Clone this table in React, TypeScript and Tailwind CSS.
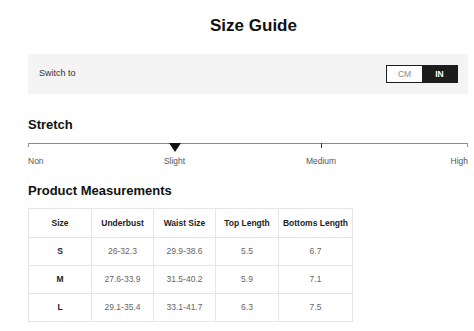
import React from 'react'

const headers = ['Size', 'Underbust', 'Waist Size', 'Top Length', 'Bottoms Length']

const rows = [
  ['S', '26-32.3', '29.9-38.6', '5.5', '6.7'],
  ['M', '27.6-33.9', '31.5-40.2', '5.9', '7.1'],
  ['L', '29.1-35.4', '33.1-41.7', '6.3', '7.5'],
]

// Stretch scale: label + position along the bar
const StretchScale = () => (
  <div className="relative mt-[11px] h-[28px]">
    <div className="h-px bg-[#8a8a8a]" />
    {/* ticks */}
    <div className="absolute left-0 top-0 h-[4px] w-px bg-[#999]" />
    <div className="absolute left-[66.6%] top-0 h-[5px] w-px bg-[#333]" />
    <div className="absolute right-0 top-0 h-[4px] w-px bg-[#999]" />
    {/* current marker */}
    <svg
      className="absolute left-[33.3%] top-0 -translate-x-1/2"
      width="12"
      height="9"
      viewBox="0 0 12 9"
    >
      <path d="M0 0 L12 0 L6 9 Z" fill="#111" />
    </svg>
    <span className="absolute left-0 top-[13px] text-[8.5px] leading-[10px] text-[#555]">Non</span>
    <span className="absolute left-[33.3%] top-[13px] -translate-x-1/2 text-[8.5px] leading-[10px] text-[#555]">
      Slight
    </span>
    <span className="absolute left-[66.6%] top-[13px] -translate-x-1/2 text-[8.5px] leading-[10px] text-[#555]">
      Medium
    </span>
    <span className="absolute right-0 top-[13px] text-[8.5px] leading-[10px] text-[#555]">High</span>
  </div>
)

export default function App() {
  return (
    <div className="h-[331px] w-[474px] overflow-hidden bg-white font-['Liberation_Sans',Arial,sans-serif] text-[#111]">
      <div className="ml-[28px] w-[440px]">
        <h1 className="pl-[11px] pt-[16px] text-center text-[17px] font-bold leading-[20px]">Size Guide</h1>

        {/* unit switch */}
        <div className="mt-[18px] flex h-[40px] items-center justify-between bg-[#f4f4f4] pl-[11px] pr-[10px]">
          <span className="text-[9px] text-[#333]">Switch to</span>
          <div className="flex h-[18px] border border-[#1c1c1c]">
            <div className="flex w-[35px] items-center justify-center bg-white text-[8.5px] text-[#888]">CM</div>
            <div className="flex w-[35px] items-center justify-center bg-[#1c1c1c] text-[8.5px] font-bold text-white">
              IN
            </div>
          </div>
        </div>

        <h2 className="mt-[23px] text-[13px] font-bold leading-[15px]">Stretch</h2>
        <StretchScale />

        <h2 className="mt-[12px] text-[13px] font-bold leading-[15px]">Product Measurements</h2>

        <table className="mt-[10px] w-[324px] table-fixed border-collapse text-[8.5px]">
          <colgroup>
            <col className="w-[63px]" />
            <col className="w-[62px]" />
            <col className="w-[62px]" />
            <col className="w-[63px]" />
            <col className="w-[74px]" />
          </colgroup>
          <thead>
            <tr className="h-[29px]">
              {headers.map((h) => (
                <th key={h} className="border border-[#e6e6e6] p-0 text-center font-bold text-[#222]">
                  {h}
                </th>
              ))}
            </tr>
          </thead>
          <tbody>
            {rows.map((r) => (
              <tr key={r[0]} className="h-[28px]">
                {r.map((c, i) => (
                  <td
                    key={i}
                    className={
                      i === 0
                        ? 'border border-[#e6e6e6] p-0 text-center font-bold text-[#222]'
                        : 'border border-[#e6e6e6] p-0 text-center text-[#666]'
                    }
                  >
                    {c}
                  </td>
                ))}
              </tr>
            ))}
          </tbody>
        </table>
      </div>
    </div>
  )
}
